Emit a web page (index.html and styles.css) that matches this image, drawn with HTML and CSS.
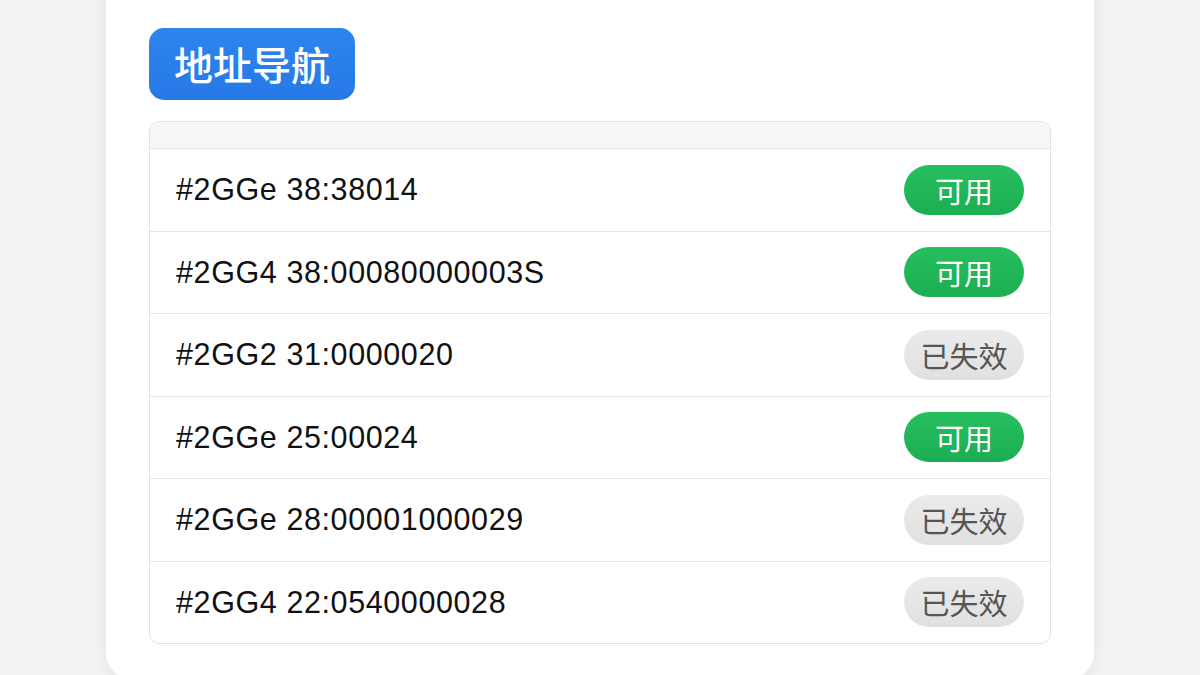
FILE: index.html
```html
<!DOCTYPE html>
<html lang="zh">
<head>
<meta charset="utf-8">
<title>地址导航</title>
<link rel="stylesheet" href="styles.css">
</head>
<body>
<div class="card">
  <div class="title">地址导航</div>
  <div class="table">
    <div class="thead"></div>
    <div class="row"><span class="addr">#2GGe 38:38014</span><span class="badge ok">可用</span></div>
    <div class="row"><span class="addr">#2GG4 38:00080000003S</span><span class="badge ok">可用</span></div>
    <div class="row"><span class="addr">#2GG2 31:0000020</span><span class="badge off">已失效</span></div>
    <div class="row"><span class="addr">#2GGe 25:00024</span><span class="badge ok">可用</span></div>
    <div class="row"><span class="addr">#2GGe 28:00001000029</span><span class="badge off">已失效</span></div>
    <div class="row"><span class="addr">#2GG4 22:0540000028</span><span class="badge off">已失效</span></div>
  </div>
</div>
</body>
</html>
```
FILE: styles.css
```css
html, body {
  margin: 0;
  padding: 0;
}
body {
  background: #f1f3f3;
  width: 1200px;
  height: 675px;
  overflow: hidden;
  font-family: "Liberation Sans", "Noto Sans CJK SC", sans-serif;
}
.card {
  box-sizing: border-box;
  width: 988px;
  margin: -30px auto 0;
  height: 708px;
  background: #ffffff;
  border-radius: 24px;
  box-shadow: 0 2px 14px rgba(0, 0, 0, 0.06);
  padding: 58px 43px 0 43px;
}
.title {
  display: inline-block;
  height: 72px;
  line-height: 70px;
  padding: 0 25px;
  border-radius: 15px;
  background: linear-gradient(180deg, #2f84ee 0%, #2679e6 100%);
  color: #ffffff;
  font-family: "Noto Sans CJK SC", sans-serif;
  font-weight: 500;
  font-size: 39px;
}
.table {
  margin-top: 21px;
  border: 1px solid #e1e3e5;
  border-radius: 10px;
  overflow: hidden;
}
.thead {
  height: 26px;
  background: #f5f6f7;
}
.row {
  box-sizing: border-box;
  height: 82.5px;
  border-top: 1px solid #e4e6e8;
  display: flex;
  align-items: center;
  justify-content: space-between;
  padding: 0 26px;
}
.addr {
  font-size: 30.5px;
  letter-spacing: 0.6px;
  color: #111113;
}
.badge {
  width: 120px;
  height: 50px;
  border-radius: 25px;
  display: flex;
  align-items: center;
  justify-content: center;
  font-family: "Noto Sans CJK SC", sans-serif;
  font-size: 29px;
}
.ok {
  background: linear-gradient(180deg, #26bf5e 0%, #1cae52 100%);
  color: #ffffff;
}
.off {
  background: linear-gradient(180deg, #ebebeb 0%, #e0e0e0 100%);
  color: #555555;
}
```
